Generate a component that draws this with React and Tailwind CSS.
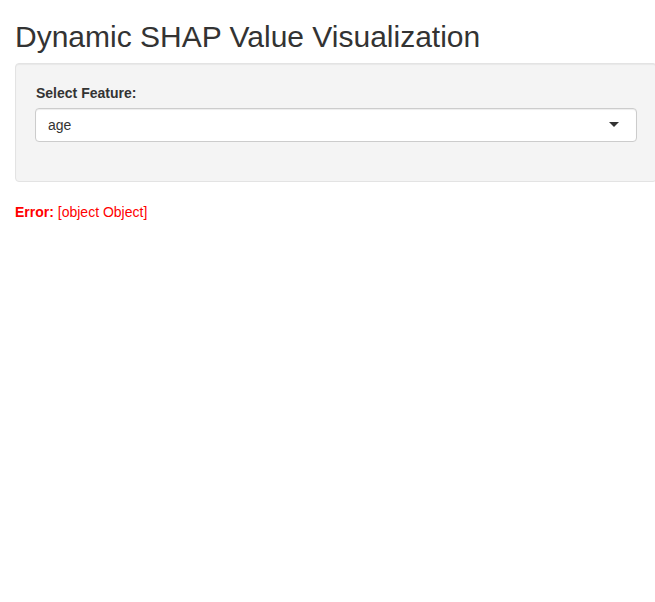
export default function App() {
  return (
    <div className="min-h-screen bg-white px-[15px] text-[#333] overflow-hidden" style={{ fontFamily: '"Liberation Sans", Arial, sans-serif' }}>
      <h2 className="mt-[20px] mb-[10px] text-[30px] leading-[33px] font-normal">Dynamic SHAP Value Visualization</h2>
      <div className="w-[642px] shrink-0 rounded-[4px] border border-[#e3e3e3] bg-[#f4f4f4] p-[19px] mb-[20px] shadow-[inset_0_1px_1px_rgba(0,0,0,0.05)]">
        <div className="mb-[20px]">
          <label className="mb-[5px] block pl-[1px] text-[14px] font-bold leading-[20px]">Select Feature:</label>
          <div className="relative flex h-[34px] items-center rounded-[4px] border border-[#ccc] bg-white px-[12px] text-[14px] leading-[20px] shadow-[inset_0_1px_1px_rgba(0,0,0,0.075)]">
            <span>age</span>
            <span className="absolute right-[17px] top-[13px] h-0 w-0 border-x-[5px] border-t-[5px] border-x-transparent border-t-[#333]" />
          </div>
        </div>
      </div>
      <div className="text-[14px] leading-[20px] text-[#ff0000]">
        <span className="font-bold">Error:</span> [object Object]
      </div>
    </div>
  );
}
